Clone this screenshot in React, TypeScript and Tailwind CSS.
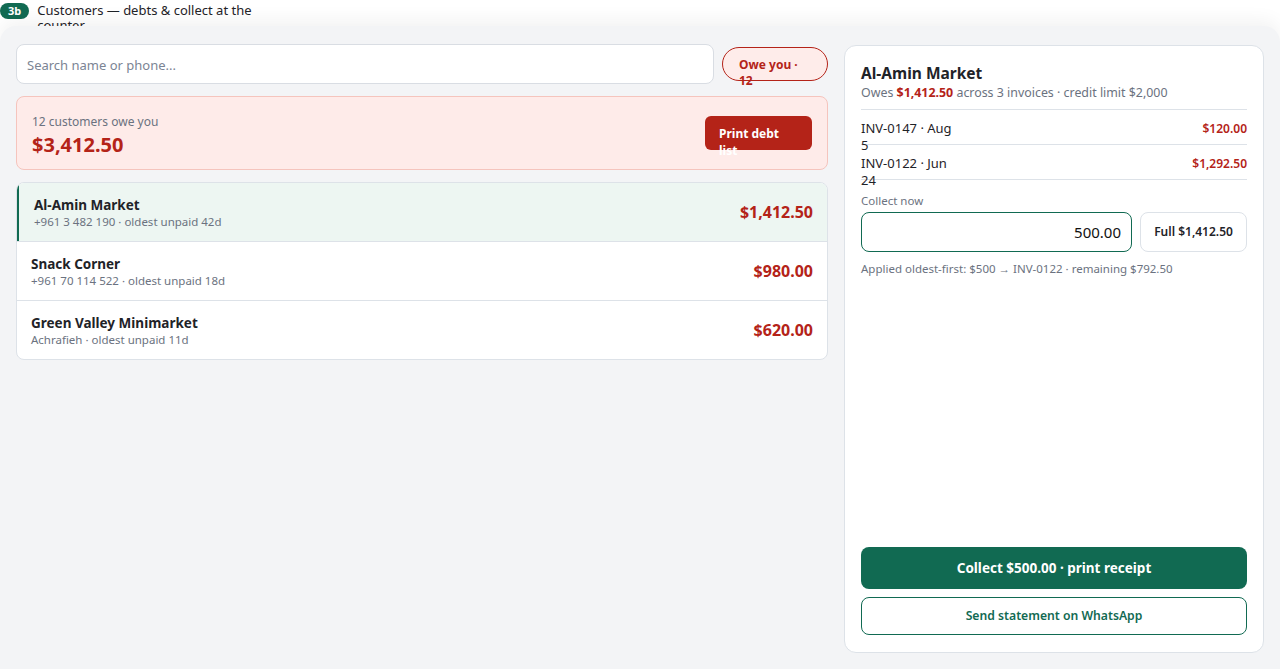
import React from 'react';

const CUSTOMERS = [
  { name: 'Al-Amin Market', meta: '+961 3 482 190 · oldest unpaid 42d', amount: '$1,412.50', active: true },
  { name: 'Snack Corner', meta: '+961 70 114 522 · oldest unpaid 18d', amount: '$980.00' },
  { name: 'Green Valley Minimarket', meta: 'Achrafieh · oldest unpaid 11d', amount: '$620.00' },
];

const INVOICES = [
  { ref: 'INV-0147 · Aug 5', amount: '$120.00' },
  { ref: 'INV-0122 · Jun 24', amount: '$1,292.50' },
];

export default function App() {
  return (
    <div className="flex h-[669px] flex-col overflow-hidden bg-white text-[#1f2328]" style={{ fontFamily: '"Noto Sans", "Open Sans", sans-serif' }}>
      {/* header strip */}
      <div className="flex h-[26px] shrink-0 items-start gap-2 pt-[3px]">
        <span className="rounded-full bg-[#116a52] px-2 py-[1px] text-[11px] font-bold leading-[14px] text-white">3b</span>
        <span className="w-[222px] text-[13px] leading-[15px] text-[#1f2328]">Customers — debts &amp; collect at the counter</span>
      </div>

      <main className="relative flex min-h-0 flex-1 gap-4 rounded-t-2xl bg-[#f3f4f6] px-4 pb-4 pt-[18px] shadow-[0_-6px_18px_rgba(0,0,0,0.05)]">
        {/* left column */}
        <section className="flex w-[812px] flex-col">
          <div className="flex items-center gap-2">
            <input
              placeholder="Search name or phone..."
              className="h-10 flex-1 rounded-lg border border-[#d9dde3] bg-white px-[10px] pt-[1px] text-[13px] text-[#1f2328] outline-none placeholder:text-[#7b8494]"
            />
            <button className="flex h-[34px] w-[106px] items-start rounded-full border border-[#b42318] bg-[#feecea] px-4 pt-[9px] text-left text-[12px] font-bold leading-[16px] text-[#b42318]">
              Owe you · 12
            </button>
          </div>

          <div className="mt-3 flex h-[74px] items-center justify-between rounded-lg border border-[#f5c4bd] bg-[#feebe9] px-[15px]">
            <div className="pt-[5px]">
              <div className="text-[12px] leading-4 text-[#6b7280]">12 customers owe you</div>
              <div className="mt-[3px] text-[20px] font-bold leading-6 text-[#b42318]">$3,412.50</div>
            </div>
            <button className="flex h-[34px] w-[107px] items-start rounded-md bg-[#b42318] px-[14px] pt-[9px] text-left text-[12px] font-bold leading-[17px] text-white">
              Print debt list
            </button>
          </div>

          <div className="mt-3 overflow-hidden rounded-lg border border-[#dde2e8] bg-white">
            {CUSTOMERS.map((c, i) => (
              <div
                key={c.name}
                className={
                  'flex items-center justify-between pr-[14px] ' +
                  (i > 0 ? 'h-[59px] border-t border-[#dde2e8] ' : 'h-[58px] ') +
                  (c.active ? 'border-l-2 border-l-[#116a52] bg-[#edf6f2] pl-[15px]' : 'pl-[14px]')
                }
              >
                <div className={i > 0 ? 'pt-[2px]' : 'pt-[3px]'}>
                  <div className="text-[13.5px] font-bold leading-[17px] text-[#1f2328]">{c.name}</div>
                  <div className="text-[11.5px] leading-4 text-[#6b7280]">{c.meta}</div>
                </div>
                <div className="text-[16px] font-bold text-[#b42318]">{c.amount}</div>
              </div>
            ))}
          </div>
        </section>

        {/* right detail panel */}
        <aside className="mt-[1px] flex w-[420px] flex-col rounded-xl border border-[#dde2e8] bg-white px-4 pb-[17px] pt-[17px]">
          <div className="text-[15.5px] font-bold leading-5 text-[#1f2328]">Al-Amin Market</div>
          <div className="mt-[1px] text-[12.4px] leading-[17px] text-[#6b7280]">
            Owes <span className="font-bold text-[#b42318]">$1,412.50</span> across 3 invoices · credit limit $2,000
          </div>

          <div className="mt-[8px] border-t border-[#dde2e8]">
            {INVOICES.map((inv) => (
              <div key={inv.ref} className="flex h-[35px] justify-between border-b border-[#dde2e8] pt-[10px]">
                <span className="w-[92px] text-[13px] leading-[17px] text-[#1f2328]">{inv.ref}</span>
                <span className="text-[12px] font-semibold leading-[17px] text-[#b42318]">{inv.amount}</span>
              </div>
            ))}
          </div>

          <div className="mt-[13px] text-[11.5px] leading-4 text-[#6b7280]">Collect now</div>
          <div className="mt-[3px] flex gap-2">
            <input
              defaultValue="500.00"
              className="h-10 flex-1 rounded-lg border border-[#116a52] bg-white px-[10px] text-right text-[15px] text-[#111] outline-none"
            />
            <button className="h-10 w-[107px] rounded-lg border border-[#dde2e8] bg-white text-[12px] font-semibold text-[#1f2328]">
              Full $1,412.50
            </button>
          </div>
          <div className="mt-[9px] text-[11.5px] leading-4 text-[#6b7280]">
            Applied oldest-first: $500 → INV-0122 · remaining $792.50
          </div>

          <div className="mt-auto flex flex-col gap-2">
            <button className="h-[42px] rounded-lg bg-[#116a52] pt-[1px] text-[13.5px] font-bold text-white">
              Collect $500.00 · print receipt
            </button>
            <button className="h-[38px] rounded-lg border border-[#116a52] bg-white text-[12.2px] font-semibold text-[#116a52]">
              Send statement on WhatsApp
            </button>
          </div>
        </aside>
      </main>
    </div>
  );
}
